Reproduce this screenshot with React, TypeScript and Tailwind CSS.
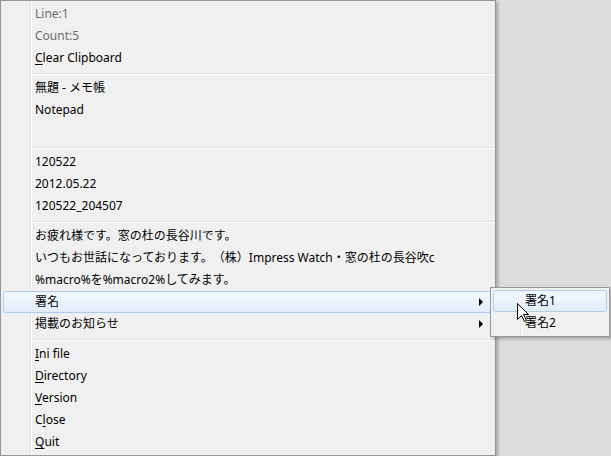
import type { ReactNode } from "react";

type Item =
  | { kind: "sep" }
  | {
      kind: "item";
      label: ReactNode;
      disabled?: boolean;
      sub?: boolean;
      active?: boolean;
    };

const u = (ch: string) => <span className="underline underline-offset-2">{ch}</span>;

const items: Item[] = [
  { kind: "item", label: "Line:1", disabled: true },
  { kind: "item", label: "Count:5", disabled: true },
  { kind: "item", label: <>{u("C")}lear Clipboard</> },
  { kind: "sep" },
  { kind: "item", label: "無題 - メモ帳" },
  { kind: "item", label: "Notepad" },
  { kind: "item", label: "" },
  { kind: "sep" },
  { kind: "item", label: "120522" },
  { kind: "item", label: "2012.05.22" },
  { kind: "item", label: "120522_204507" },
  { kind: "sep" },
  { kind: "item", label: "お疲れ様です。窓の杜の長谷川です。" },
  { kind: "item", label: "いつもお世話になっております。（株）Impress Watch・窓の杜の長谷吹c" },
  { kind: "item", label: "%macro%を%macro2%してみます。" },
  { kind: "item", label: "署名", sub: true, active: true },
  { kind: "item", label: "掲載のお知らせ", sub: true },
  { kind: "sep" },
  { kind: "item", label: <>{u("I")}ni file</> },
  { kind: "item", label: <>{u("D")}irectory</> },
  { kind: "item", label: <>{u("V")}ersion</> },
  { kind: "item", label: <>C{u("l")}ose</> },
  { kind: "item", label: <>{u("Q")}uit</> },
];

const Row = ({ item }: { item: Item }) => {
  if (item.kind === "sep") {
    return (
      <div className="h-[8px] pt-[4px] pl-[28px]">
        <div className="h-[2px] border-t border-[#e0e0e0] border-b border-b-white" />
      </div>
    );
  }
  return (
    <div
      className={`relative flex h-[22px] items-center rounded-[3px] border pl-[31px] pr-[6px] ${
        item.active
          ? "border-[#aeccf0] bg-gradient-to-b from-[#f3f8fe] to-[#e2edfa]"
          : "border-transparent"
      } ${item.disabled ? "text-[#6d6d6d]" : "text-black"}`}
    >
      <span className="whitespace-nowrap leading-none [text-spacing-trim:space-all]">{item.label}</span>
      {item.sub && (
        <span className="ml-auto mr-[3px] h-0 w-0 border-y-[4px] border-l-[4px] border-y-transparent border-l-black" />
      )}
    </div>
  );
};

const Menu = ({ list, className }: { list: Item[]; className: string }) => (
  <div
    className={`border border-[#979797] bg-[#f0f0f0] p-[2px] shadow-[2px_2px_3px_rgba(0,0,0,0.25)] ${className}`}
  >
    <div className="absolute inset-y-[2px] left-[29px] w-[2px] border-l border-[#e2e3e3] border-r border-r-white" />
    <div className="relative flex flex-col">
      {list.map((item, i) => (
        <Row key={i} item={item} />
      ))}
    </div>
  </div>
);

const subItems: Item[] = [
  { kind: "item", label: "署名1", active: true },
  { kind: "item", label: "署名2" },
];

export default function App() {
  return (
    <div
      className="relative h-[456px] w-[611px] overflow-hidden bg-[#dcdcdc] text-[12px]"
      style={{ fontFamily: "'Noto Sans', 'Noto Sans CJK JP', sans-serif" }}
    >
      <Menu list={items} className="relative h-[456px] w-[496px]" />
      <Menu list={subItems} className="absolute left-[490px] top-[287px] w-[120px]" />
      <svg
        className="absolute left-[517px] top-[303px]"
        width="13"
        height="20"
        viewBox="0 0 13 20"
      >
        <polygon
          points="0.5,0.5 0.5,16.5 4.5,12.5 7.5,18.5 9.5,17.5 6.5,11.5 11.5,11.5"
          fill="white"
          stroke="black"
          strokeWidth="1"
        />
      </svg>
    </div>
  );
}
